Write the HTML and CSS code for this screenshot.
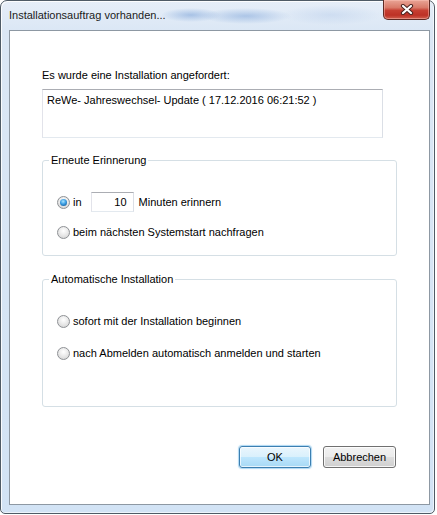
FILE: index.html
```html
<!DOCTYPE html>
<html lang="de">
<head>
<meta charset="utf-8">
<title>Installationsauftrag vorhanden...</title>
<link rel="stylesheet" href="styles.css">
</head>
<body>
<div class="window">
  <div class="titlebar">
    <span class="title">Installationsauftrag vorhanden...</span>
    <div class="close">
      <svg width="14" height="11" viewBox="0 0 14 11">
        <path d="M3 2 L11 9 M11 2 L3 9" stroke="#4a2420" stroke-width="4.2" stroke-linecap="round" fill="none"/>
        <path d="M3 2 L11 9 M11 2 L3 9" stroke="#ffffff" stroke-width="2.2" stroke-linecap="round" fill="none"/>
      </svg>
    </div>
  </div>
  <div class="client">
    <div class="prompt">Es wurde eine Installation angefordert:</div>
    <div class="memo">ReWe- Jahreswechsel- Update ( 17.12.2016 06:21:52 )</div>

    <fieldset class="group group-remind">
      <legend>Erneute Erinnerung</legend>
      <div class="options options-remind">
        <div class="option">
          <span class="radio checked"></span>
          <span class="opt-label">in</span>
          <span class="num">10</span>
          <span class="opt-label">Minuten erinnern</span>
        </div>
        <div class="option">
          <span class="radio"></span>
          <span class="opt-label">beim nächsten Systemstart nachfragen</span>
        </div>
      </div>
    </fieldset>

    <fieldset class="group group-auto">
      <legend>Automatische Installation</legend>
      <div class="options options-auto">
        <div class="option">
          <span class="radio"></span>
          <span class="opt-label">sofort mit der Installation beginnen</span>
        </div>
        <div class="option">
          <span class="radio"></span>
          <span class="opt-label">nach Abmelden automatisch anmelden und starten</span>
        </div>
      </div>
    </fieldset>

    <div class="buttons">
      <button class="btn btn-default">OK</button>
      <button class="btn">Abbrechen</button>
    </div>
  </div>
</div>
</body>
</html>
```

FILE: styles.css
```css
html, body {
  margin: 0;
  padding: 0;
  background: #ffffff;
}

body {
  font-family: "Liberation Sans", Arial, sans-serif;
  font-size: 11px;
  line-height: 13px;
  color: #000000;
}

.window {
  box-sizing: border-box;
  width: 435px;
  height: 514px;
  border: 1px solid #4f5b66;
  border-radius: 7px 7px 5px 5px;
  padding: 0 4px 8px 8px;
  display: flex;
  flex-direction: column;
  background:
    radial-gradient(ellipse 30px 7px at 190px 14px, rgba(120,160,215,0.55), rgba(120,160,215,0) 100%),
    radial-gradient(ellipse 45px 8px at 245px 15px, rgba(120,160,215,0.5), rgba(120,160,215,0) 100%),
    radial-gradient(ellipse 50px 10px at 330px 14px, rgba(170,195,230,0.35), rgba(170,195,230,0) 100%),
    linear-gradient(to bottom, #e6eef8 0px, #dbe7f5 30px, #d2e3f5 100%);
  box-shadow: inset 1px 1px 0 rgba(255,255,255,0.85), inset -1px -1px 0 rgba(255,255,255,0.6);
}

.titlebar {
  height: 29px;
  display: flex;
  align-items: flex-start;
  flex: none;
}

.title {
  margin-top: 8px;
  color: #1b1b1b;
}

.close {
  margin-left: auto;
  margin-top: -1px;
  width: 47px;
  height: 20px;
  box-sizing: border-box;
  border: 1px solid #5e2a24;
  border-top: none;
  border-radius: 0 0 5px 5px;
  background: linear-gradient(to bottom, #e9a596 0%, #d97a69 40%, #c63f32 55%, #bd3126 80%, #d0604f 100%);
  box-shadow: inset 0 0 0 1px rgba(255,200,190,0.45);
  display: flex;
  align-items: center;
  justify-content: center;
}

.client {
  flex: 1;
  box-sizing: border-box;
  background: #ffffff;
  border: 1px solid #8d98a3;
  padding: 38px 0 0 32px;
  display: flex;
  flex-direction: column;
  align-items: flex-start;
}

.memo {
  box-sizing: border-box;
  width: 341px;
  height: 49px;
  margin-top: 7px;
  padding: 4px 4px 0;
  border: 1px solid;
  border-color: #abadb3 #dbdfe6 #e3e9ef #e2e3ea;
  color: #000000;
}

.group {
  box-sizing: border-box;
  width: 355px;
  margin: 0;
  padding: 0;
  min-inline-size: 0;
  border: 1px solid #d5dfe5;
  border-radius: 3px;
}

.group legend {
  margin-left: 6px;
  padding: 0 2px;
  line-height: 13px;
}

.group-remind {
  margin-top: 16px;
}

.group-auto {
  margin-top: 17px;
}

.options {
  display: flex;
  flex-direction: column;
  padding-left: 14px;
}

.options-remind {
  padding-top: 25px;
  padding-bottom: 13px;
  gap: 10px;
}

.options-auto {
  padding-top: 25px;
  padding-bottom: 43px;
  gap: 12px;
}

.option {
  display: flex;
  align-items: center;
  height: 20px;
}

.radio {
  position: relative;
  box-sizing: border-box;
  width: 13px;
  height: 13px;
  border-radius: 50%;
  border: 1px solid #8e9195;
  background: radial-gradient(circle at 50% 35%, #ffffff 0%, #ebebeb 45%, #cfcfcf 100%);
  margin-right: 3px;
  flex: none;
}

.radio.checked::after {
  content: "";
  position: absolute;
  left: 2px;
  top: 2px;
  width: 7px;
  height: 7px;
  border-radius: 50%;
  background: radial-gradient(circle at 45% 35%, #a9e4ff 0%, #3b9ee3 45%, #175e9c 85%, #0f4272 100%);
}

.num {
  box-sizing: border-box;
  width: 43px;
  height: 20px;
  margin-left: 9px;
  margin-right: 5px;
  padding: 0 6px 0 0;
  border: 1px solid;
  border-color: #abadb3 #dbdfe6 #e3e9ef #e2e3ea;
  text-align: right;
  line-height: 18px;
}

.buttons {
  margin-top: 39px;
  width: 354px;
  display: flex;
  justify-content: flex-end;
  gap: 12px;
}

.btn {
  box-sizing: border-box;
  height: 22px;
  width: 73px;
  padding: 0;
  font-family: "Liberation Sans", Arial, sans-serif;
  font-size: 11px;
  color: #000000;
  border: 1px solid #707070;
  border-radius: 3px;
  background: linear-gradient(to bottom, #f2f2f2 0%, #ebebeb 50%, #dddddd 51%, #cfcfcf 100%);
  box-shadow: inset 0 0 0 1px rgba(255,255,255,0.8);
}

.btn-default {
  width: 72px;
  border-color: #3c7fb1;
  background: linear-gradient(to bottom, #eaf6fd 0%, #d9f0fc 50%, #bee6fd 51%, #a7d9f5 100%);
  box-shadow: inset 0 0 0 1px rgba(255,255,255,0.7), 0 0 1px 1px rgba(120,190,235,0.6);
}
```
